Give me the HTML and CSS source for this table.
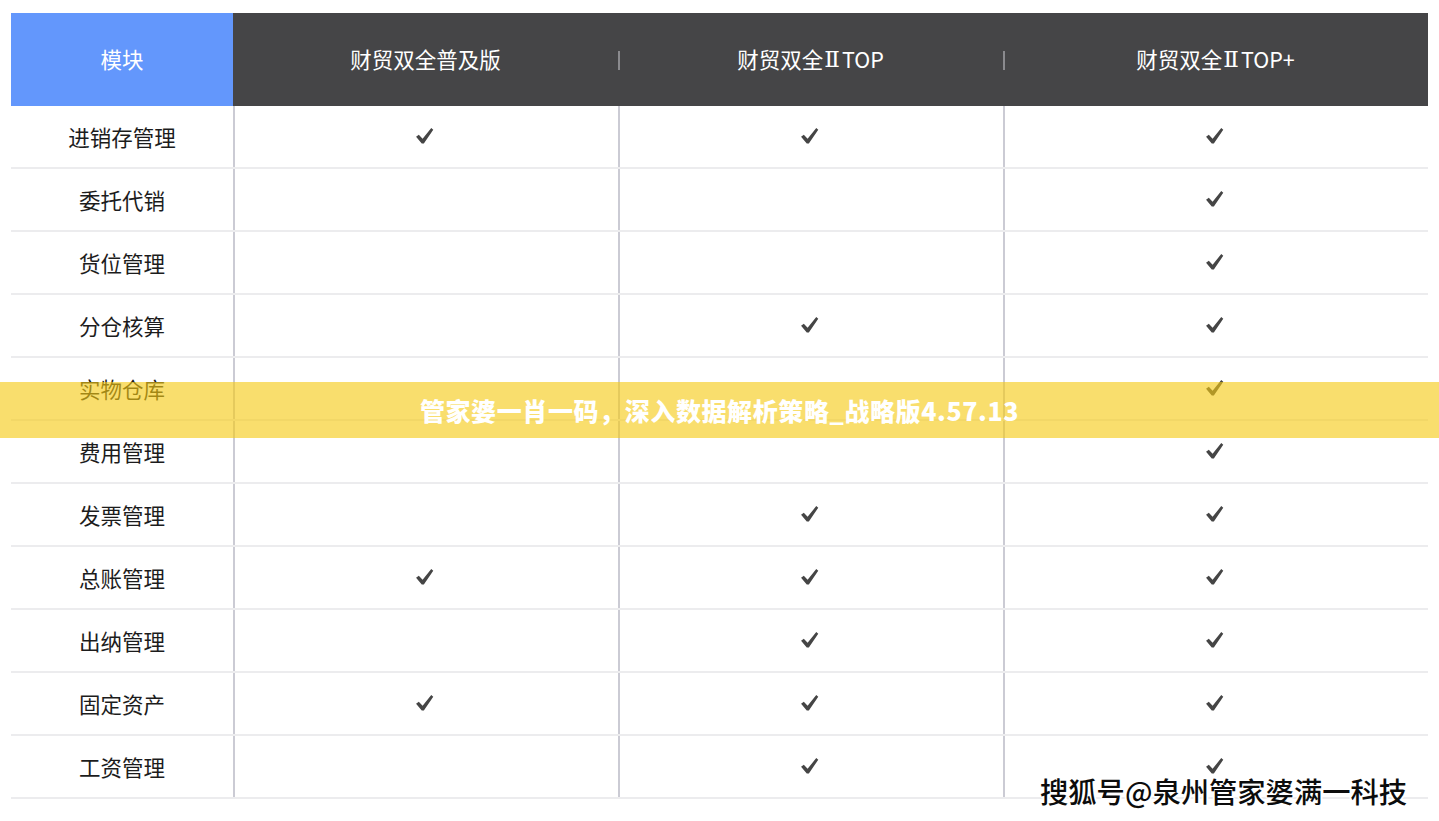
FILE: index.html
```html
<!DOCTYPE html>
<html lang="zh-CN">
<head>
<meta charset="utf-8">
<title>功能对比</title>
<link rel="stylesheet" href="styles.css">
</head>
<body>
<svg width="0" height="0" class="defs">
  <defs>
    <symbol id="chk" viewBox="0 0 18 18">
      <path d="M1 10.2 L3.6 8.2 L7.2 12 L15.4 2 L17.3 3.5 L8.4 16.6 L6.4 16.6 Z" fill="#454545"/>
    </symbol>
  </defs>
</svg>
<div class="table">
  <div class="row head">
    <div class="cell h1">模块</div>
    <div class="cell h">财贸双全普及版</div>
    <div class="cell h sep">财贸双全<span class="rn">Ⅱ</span>TOP</div>
    <div class="cell h sep">财贸双全<span class="rn">Ⅱ</span>TOP+</div>
  </div>
  <div class="row"><div class="cell name">进销存管理</div><div class="cell"><svg class="ck"><use href="#chk"/></svg></div><div class="cell"><svg class="ck"><use href="#chk"/></svg></div><div class="cell"><svg class="ck"><use href="#chk"/></svg></div></div>
  <div class="row"><div class="cell name">委托代销</div><div class="cell"></div><div class="cell"></div><div class="cell"><svg class="ck"><use href="#chk"/></svg></div></div>
  <div class="row"><div class="cell name">货位管理</div><div class="cell"></div><div class="cell"></div><div class="cell"><svg class="ck"><use href="#chk"/></svg></div></div>
  <div class="row"><div class="cell name">分仓核算</div><div class="cell"></div><div class="cell"><svg class="ck"><use href="#chk"/></svg></div><div class="cell"><svg class="ck"><use href="#chk"/></svg></div></div>
  <div class="row"><div class="cell name">实物仓库</div><div class="cell"></div><div class="cell"></div><div class="cell"><svg class="ck"><use href="#chk"/></svg></div></div>
  <div class="row"><div class="cell name">费用管理</div><div class="cell"></div><div class="cell"></div><div class="cell"><svg class="ck"><use href="#chk"/></svg></div></div>
  <div class="row"><div class="cell name">发票管理</div><div class="cell"></div><div class="cell"><svg class="ck"><use href="#chk"/></svg></div><div class="cell"><svg class="ck"><use href="#chk"/></svg></div></div>
  <div class="row"><div class="cell name">总账管理</div><div class="cell"><svg class="ck"><use href="#chk"/></svg></div><div class="cell"><svg class="ck"><use href="#chk"/></svg></div><div class="cell"><svg class="ck"><use href="#chk"/></svg></div></div>
  <div class="row"><div class="cell name">出纳管理</div><div class="cell"></div><div class="cell"><svg class="ck"><use href="#chk"/></svg></div><div class="cell"><svg class="ck"><use href="#chk"/></svg></div></div>
  <div class="row"><div class="cell name">固定资产</div><div class="cell"><svg class="ck"><use href="#chk"/></svg></div><div class="cell"><svg class="ck"><use href="#chk"/></svg></div><div class="cell"><svg class="ck"><use href="#chk"/></svg></div></div>
  <div class="row"><div class="cell name">工资管理</div><div class="cell"></div><div class="cell"><svg class="ck"><use href="#chk"/></svg></div><div class="cell"><svg class="ck"><use href="#chk"/></svg></div></div>
</div>
<div class="banner">管家婆一肖一码，深入数据解析策略_战略版4.57.13</div>
<div class="watermark">搜狐号@泉州管家婆满一科技</div>
</body>
</html>
```
FILE: styles.css
```css
html, body {
  margin: 0;
  padding: 0;
  background: #ffffff;
}
body {
  font-family: "Noto Sans CJK SC", "Noto Sans", sans-serif;
  width: 1439px;
  height: 821px;
  overflow: hidden;
  position: relative;
}
.defs {
  position: absolute;
}
.table {
  margin: 13px 0 0 11px;
  width: 1417px;
}
.row {
  display: grid;
  grid-template-columns: 222px 385px 385px 425px;
  height: 63px;
  box-sizing: border-box;
  border-bottom: 2px solid #ececee;
}
.row.head {
  height: 93px;
  border-bottom: none;
  background: #454547;
}
.cell {
  display: flex;
  align-items: center;
  justify-content: center;
  border-left: 2px solid #cbcbd4;
  font-size: 21.5px;
  color: #1c1c1c;
}
.cell.name {
  border-left: none;
}
.head .cell {
  border-left: none;
  color: #ffffff;
  font-size: 21.5px;
  position: relative;
  padding-bottom: 2px;
}
.head .rn {
  font-family: "DejaVu Serif", serif;
  font-size: 23px;
  margin: 0 2px 0 1px;
}
.head .h1 {
  background: #6397fc;
}
.head .sep::before {
  content: "";
  position: absolute;
  left: 0;
  top: 38px;
  width: 2px;
  height: 19px;
  background: #8a8a8e;
}
.ck {
  width: 19px;
  height: 19px;
  margin: -2px 0 0 -4px;
}
.banner {
  position: absolute;
  left: 0;
  top: 382px;
  width: 100%;
  height: 56px;
  background: rgba(246, 202, 20, 0.62);
  color: #ffffff;
  font-weight: 900;
  font-size: 25px;
  display: flex;
  align-items: center;
  justify-content: center;
  letter-spacing: 0.6px;
}
.watermark {
  position: absolute;
  left: 1040px;
  top: 770px;
  font-size: 28.3px;
  font-weight: 500;
  color: #0c0c0c;
  text-shadow: -1px -1px 0 #fff, 1px -1px 0 #fff, -1px 1px 0 #fff, 1px 1px 0 #fff, 0 2px 0 #fff, 2px 0 0 #fff, -2px 0 0 #fff, 0 -2px 0 #fff;
  letter-spacing: 0;
}
```
